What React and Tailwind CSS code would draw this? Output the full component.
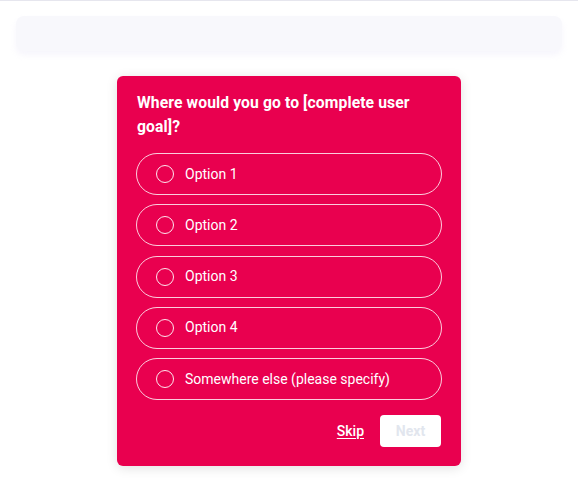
import React from 'react';

export default function App() {
  const options = ["Option 1", "Option 2", "Option 3", "Option 4", "Somewhere else (please specify)"];

  return (
    <div className="w-[578px] h-[496px] bg-white border-t border-[#e6e6ee] font-['Roboto',sans-serif] overflow-hidden">
      {/* placeholder bar */}
      <div className="px-4 pt-[15px]">
        <div className="h-[35px] rounded-lg bg-[#f8f8fc] shadow-[0_4px_6px_rgba(240,238,250,0.6)]"></div>
      </div>

      {/* survey card */}
      <div className="flex justify-center pt-[25px]">
        <div className="w-[344px] bg-[#e9004f] rounded-md shadow-[0_2px_12px_rgba(0,0,0,0.12)] px-5 pt-[15px] pb-[19px]">
          <h2 className="text-white font-bold text-[15.7px] leading-6 tracking-[0.1px]">
            Where would you go to [complete user goal]?
          </h2>

          <div className="mt-[14px] -mx-px flex flex-col gap-[9.25px]">
            {options.map((opt) => (
              <label key={opt} className="h-[42px] flex items-center border border-white/80 rounded-full pl-[19px] cursor-pointer">
                <span className="w-[18px] h-[18px] rounded-full border border-white/90 shrink-0"></span>
                <span className="ml-[11px] text-white text-[14px]">{opt}</span>
              </label>
            ))}
          </div>

          <div className="mt-[15px] flex items-center justify-end gap-4">
            <button className="text-white text-[14px] font-medium underline underline-offset-2">Skip</button>
            <button className="w-[61px] h-[32px] rounded bg-white text-[#e2e6ee] text-[14px] font-bold">Next</button>
          </div>
        </div>
      </div>
    </div>
  );
}
